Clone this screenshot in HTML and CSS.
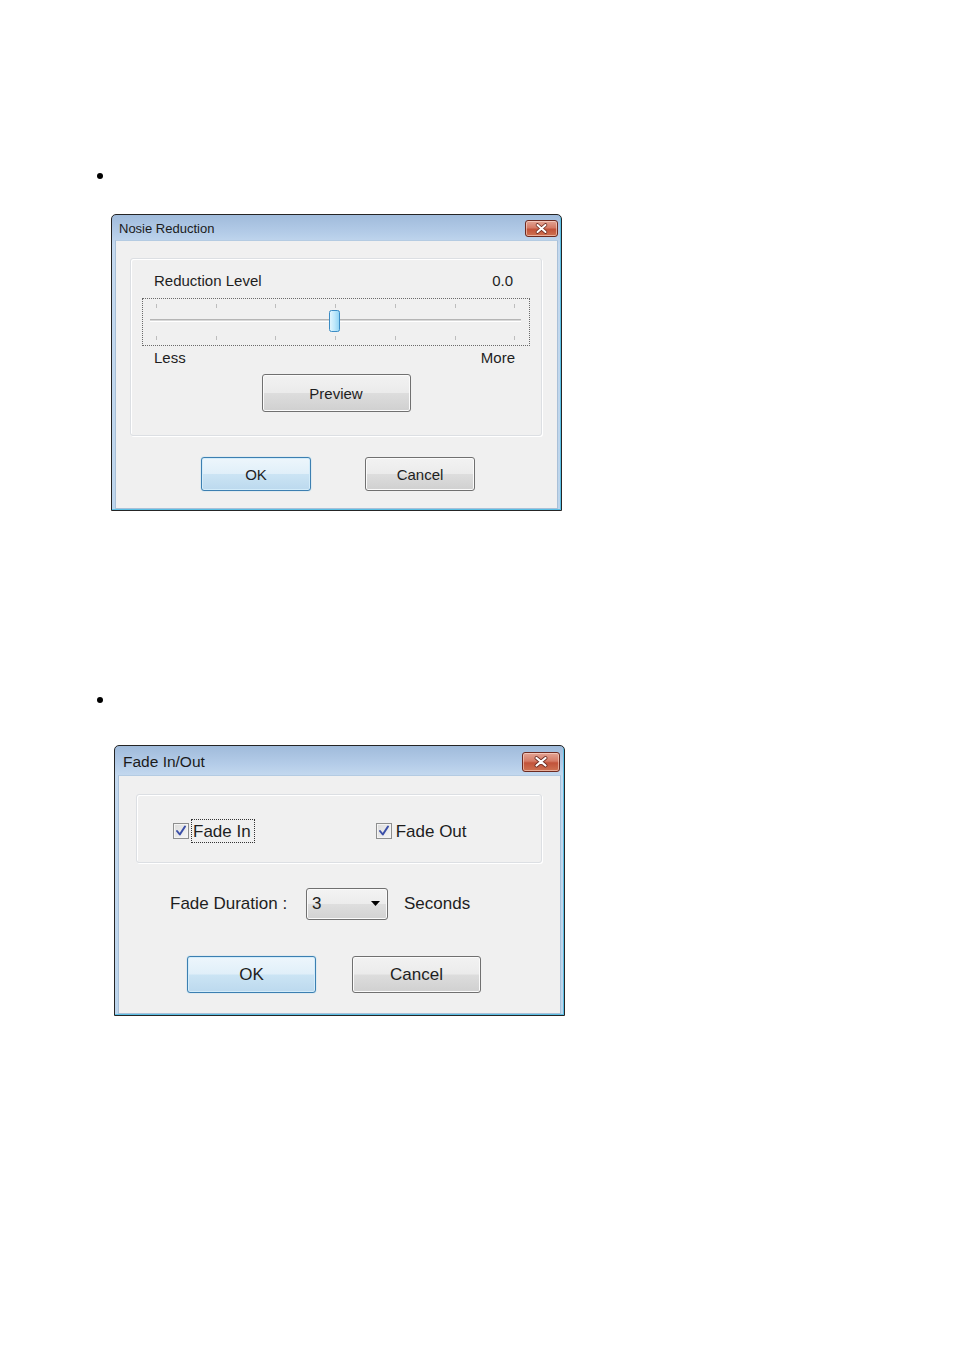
FILE: index.html
```html
<!DOCTYPE html>
<html>
<head>
<meta charset="utf-8">
<link rel="stylesheet" href="styles.css">
</head>
<body>
<div class="page">
  <div class="bullet bullet-1"></div>

  <div class="dialog dialog-nr">
    <div class="titlebar tb-nr">
      <span class="title title-nr">Nosie Reduction</span>
      <span class="close close-nr">
        <svg width="33" height="17" viewBox="0 0 33 17"><path d="M12.5 5 L20.5 12 M20.5 5 L12.5 12" stroke="#6a2a20" stroke-width="3.6" stroke-linecap="round"/><path d="M12.5 5 L20.5 12 M20.5 5 L12.5 12" stroke="#ffffff" stroke-width="2" stroke-linecap="round"/></svg>
      </span>
    </div>
    <div class="client client-nr">
      <div class="group group-nr">
        <div class="row-level">
          <span>Reduction Level</span>
          <span>0.0</span>
        </div>
        <div class="slider">
          <svg width="386" height="46" viewBox="0 0 386 46">
            <g stroke="#bdbdbd" stroke-width="1">
              <line x1="13.5" y1="5" x2="13.5" y2="9"/>
              <line x1="73.5" y1="5" x2="73.5" y2="9"/>
              <line x1="132.5" y1="5" x2="132.5" y2="9"/>
              <line x1="192.5" y1="5" x2="192.5" y2="9"/>
              <line x1="252.5" y1="5" x2="252.5" y2="9"/>
              <line x1="312.5" y1="5" x2="312.5" y2="9"/>
              <line x1="371.5" y1="5" x2="371.5" y2="9"/>
              <line x1="13.5" y1="37" x2="13.5" y2="41"/>
              <line x1="73.5" y1="37" x2="73.5" y2="41"/>
              <line x1="132.5" y1="37" x2="132.5" y2="41"/>
              <line x1="192.5" y1="37" x2="192.5" y2="41"/>
              <line x1="252.5" y1="37" x2="252.5" y2="41"/>
              <line x1="312.5" y1="37" x2="312.5" y2="41"/>
              <line x1="371.5" y1="37" x2="371.5" y2="41"/>
            </g>
            <line x1="7" y1="20.5" x2="378" y2="20.5" stroke="#b5b5b5"/>
            <line x1="7" y1="21.5" x2="378" y2="21.5" stroke="#d8d8d8"/>
            <line x1="7" y1="22.5" x2="378" y2="22.5" stroke="#ffffff"/>
            <defs>
              <linearGradient id="thumbg" x1="0" y1="0" x2="1" y2="0">
                <stop offset="0" stop-color="#e4f6fe"/>
                <stop offset="0.5" stop-color="#bfe8fb"/>
                <stop offset="1" stop-color="#8fd3f4"/>
              </linearGradient>
            </defs>
            <rect x="186.5" y="11.5" width="10" height="21" rx="2" fill="url(#thumbg)" stroke="#3c8cc4"/>
          </svg>
        </div>
        <div class="row-less">
          <span>Less</span>
          <span>More</span>
        </div>
        <div class="btn btn-preview">Preview</div>
      </div>
      <div class="buttons buttons-nr">
        <div class="btn btn-default btn-nr">OK</div>
        <div class="btn btn-nr">Cancel</div>
      </div>
    </div>
  </div>

  <div class="bullet bullet-2"></div>

  <div class="dialog dialog-fd">
    <div class="titlebar tb-fd">
      <span class="title title-fd">Fade In/Out</span>
      <span class="close close-fd">
        <svg width="38" height="20" viewBox="0 0 38 20"><path d="M14.5 6 L23.5 13.5 M23.5 6 L14.5 13.5" stroke="#6a2a20" stroke-width="3.8" stroke-linecap="round"/><path d="M14.5 6 L23.5 13.5 M23.5 6 L14.5 13.5" stroke="#ffffff" stroke-width="2.2" stroke-linecap="round"/></svg>
      </span>
    </div>
    <div class="client client-fd">
      <div class="group group-fd">
        <div class="checks">
          <div class="check">
            <span class="box"><svg width="14" height="14" viewBox="0 0 14 14"><path d="M3 7 L5.8 10.5 L11 2.5" fill="none" stroke="#3b4fa8" stroke-width="2" stroke-linejoin="round" stroke-linecap="round"/></svg></span>
            <span class="label focus">Fade In</span>
          </div>
          <div class="check check-out">
            <span class="box"><svg width="14" height="14" viewBox="0 0 14 14"><path d="M3 7 L5.8 10.5 L11 2.5" fill="none" stroke="#3b4fa8" stroke-width="2" stroke-linejoin="round" stroke-linecap="round"/></svg></span>
            <span class="label">Fade Out</span>
          </div>
        </div>
      </div>
      <div class="duration">
        <span class="dur-label">Fade Duration :</span>
        <div class="combo">
          <span class="combo-val">3</span>
          <svg width="10" height="6" viewBox="0 0 10 6"><path d="M0 0 L9 0 L4.5 5 Z" fill="#000"/></svg>
        </div>
        <span class="seconds">Seconds</span>
      </div>
      <div class="buttons buttons-fd">
        <div class="btn btn-default btn-fd">OK</div>
        <div class="btn btn-fd">Cancel</div>
      </div>
    </div>
  </div>
</div>
</body>
</html>
```

FILE: styles.css
```css
* { box-sizing: border-box; }
html, body { margin: 0; padding: 0; background: #ffffff; }
body { font-family: "Liberation Sans", Arial, sans-serif; color: #000; }
.page { padding-top: 173px; }

.bullet {
  width: 6px; height: 6px; border-radius: 50%; background: #000;
  margin-left: 97px;
}
.bullet-2 { margin-top: 186px; }

.dialog {
  border: 1px solid #252525;
  border-radius: 5px 5px 0 0;
  background: linear-gradient(#a0bbdb 0px, #b4cce8 18px, #c4d9ef 30px, #bdd5ec 100%);
  padding: 0 3px 3px;
  box-shadow: inset -1px -1px 0 #5bbfe4;
}
.dialog-nr { margin-top: 35px; margin-left: 111px; width: 451px; height: 297px; }
.dialog-fd { margin-top: 42px; margin-left: 114px; width: 451px; height: 271px; }

.titlebar {
  display: flex; justify-content: space-between; align-items: flex-start;
  margin: 0 -3px;
}
.tb-nr { height: 25px; padding-left: 7px; }
.tb-fd { height: 29px; padding-left: 8px; }
.title { color: #1b1b1b; }
.title-nr { font-size: 13px; line-height: 27px; }
.title-fd { font-size: 15.5px; line-height: 31px; }

.close {
  display: block;
  border: 1px solid #6d2a20;
  border-radius: 3px;
  background: linear-gradient(#e3a494 0%, #d57b66 45%, #c2533a 55%, #cf7252 100%);
  box-shadow: inset 0 0 0 1px rgba(255,225,215,0.55);
}
.close svg { display: block; margin: -1px; }
.close-nr { width: 33px; height: 17px; margin-top: 5px; margin-right: 3px; }
.close-fd { width: 38px; height: 20px; margin-top: 6px; margin-right: 4px; }

.client {
  background: #f0f0f0;
  border: 1px solid #a9c0d8;
  border-top-color: #b4cbe2;
}
.client-nr { height: 269px; padding: 17px 0 0 14px; font-size: 15px; }
.client-fd { height: 239px; padding: 18px 0 0 17px; font-size: 17px; }

.group {
  border: 1px solid #dcdfe3;
  border-radius: 3px;
  box-shadow: inset 1px 1px 0 #ffffff, 1px 1px 0 #ffffff;
}
.group-nr { width: 412px; height: 178px; padding-top: 13px; }
.group-fd { width: 406px; height: 69px; padding-top: 24px; }

.row-level, .row-less {
  display: flex; justify-content: space-between;
  line-height: 18px; color: #1e1e1e;
}
.row-level { padding-left: 23px; padding-right: 28px; }
.row-less { padding-left: 23px; padding-right: 26px; margin-top: 3px; }

.slider {
  margin-top: 8px; margin-left: 11px;
  width: 388px; height: 48px;
  border: 1px dotted #6a6a6a;
}
.slider svg { display: block; }

.btn {
  display: flex; align-items: center; justify-content: center;
  border: 1px solid #707070;
  border-radius: 3px;
  background: linear-gradient(#f2f2f2 0%, #ebebeb 49%, #dddddd 51%, #d0d0d0 100%);
  box-shadow: inset 0 0 0 1px #fbfbfb;
  color: #1e1e1e;
}
.btn-default {
  border-color: #3c7fb1;
  background: linear-gradient(#edf6fc 0%, #e0eff9 49%, #cbe4f4 51%, #bcd9ee 100%);
  box-shadow: inset 0 0 0 1px #d3ecfa, 0 0 1px #4fb6e6;
}
.btn-preview { width: 149px; height: 38px; margin: 7px auto 0; padding-top: 1px; }

.buttons { display: flex; }
.buttons-nr { margin-top: 21px; padding-left: 71px; gap: 54px; }
.btn-nr { width: 110px; height: 34px; }
.buttons-fd { margin-top: 36px; padding-left: 51px; gap: 36px; }
.btn-fd { width: 129px; height: 37px; }

.checks { display: flex; align-items: center; padding-left: 36px; }
.check { display: flex; align-items: center; }
.check-out { margin-left: 121px; }
.box {
  width: 16px; height: 16px;
  border: 1px solid #8e8f8f;
  background: linear-gradient(135deg, #dcdcdc, #f6f6f6);
  box-shadow: inset 0 0 0 1px #f4f4f4;
  display: flex; align-items: center; justify-content: center;
}
.box svg { display: block; }
.label {
  margin-left: 2px; padding: 0 3px 0 1px;
  height: 24px; line-height: 24px;
  border: 1px dotted transparent;
  color: #1e1e1e;
}
.label.focus { border-color: #333; }

.duration { display: flex; align-items: center; margin-top: 25px; padding-left: 34px; color: #1e1e1e; }
.dur-label { width: 136px; }
.combo {
  width: 82px; height: 32px;
  border: 1px solid #707070; border-radius: 3px;
  background: linear-gradient(#f3f3f3 0%, #ececec 49%, #dedede 51%, #d2d2d2 100%);
  box-shadow: inset 0 0 0 1px #fafafa;
  display: flex; align-items: center; justify-content: space-between;
  padding: 0 6px 0 5px;
}
.combo svg { display: block; }
.seconds { margin-left: 16px; }
```
